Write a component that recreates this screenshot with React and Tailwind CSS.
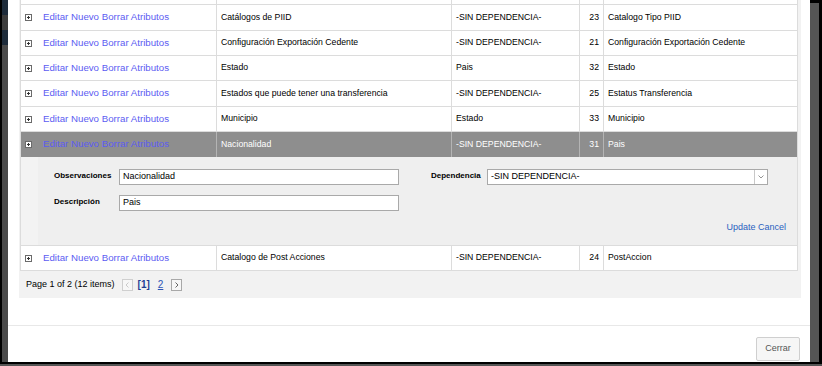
import React from "react";

const rowsTop = [
  { name: "Catálogos de PIID", dep: "-SIN DEPENDENCIA-", id: "23", desc: "Catalogo Tipo PIID", h: "h-[26px]" },
  { name: "Configuración Exportación Cedente", dep: "-SIN DEPENDENCIA-", id: "21", desc: "Configuración Exportación Cedente", h: "h-[25px]" },
  { name: "Estado", dep: "Pais", id: "32", desc: "Estado", h: "h-[25px]" },
  { name: "Estados que puede tener una transferencia", dep: "-SIN DEPENDENCIA-", id: "25", desc: "Estatus Transferencia", h: "h-[26px]" },
  { name: "Municipio", dep: "Estado", id: "33", desc: "Municipio", h: "h-[25px]" },
];

const GRID = "grid grid-cols-[17px_178px_235px_128px_24px_194px]";

function PlusIcon() {
  return (
    <svg width="7" height="7" viewBox="0 0 7 7" className="block">
      <rect x="0.5" y="0.5" width="6" height="6" fill="#fff" stroke="#6b6b6b" />
      <path d="M2 3.5H5M3.5 2V5" stroke="#333" strokeWidth="1" />
    </svg>
  );
}

function Row({ r, gray }) {
  const sep = gray ? "border-l border-[#b4b4b4]" : "border-l border-[#dcdcdc]";
  const txt = gray ? "text-white" : "text-black";
  return (
    <div className={`${GRID} ${r.h} ${gray ? "bg-[#8e8e8e]" : "bg-white border-b border-[#dcdcdc]"} text-[8.7px] ${txt}`}>
      <div className="flex items-center pl-[4px]">
        <PlusIcon />
      </div>
      <div className="flex items-center pl-[5px] text-[9.7px] text-[#5c5cf2] whitespace-nowrap">
        Editar Nuevo Borrar Atributos
      </div>
      <div className={`flex items-center pl-[4px] whitespace-nowrap ${sep}`}>{r.name}</div>
      <div className={`flex items-center pl-[4px] whitespace-nowrap ${sep}`}>{r.dep}</div>
      <div className={`flex items-center justify-end pr-[4px] ${sep}`}>{r.id}</div>
      <div className={`flex items-center pl-[4px] whitespace-nowrap ${sep}`}>{r.desc}</div>
    </div>
  );
}

function EditForm() {
  return (
    <div className="flex h-[89px] border-b border-[#dcdcdc]">
      <div className="w-[17px] bg-[#f3f3f3]" />
      <div className="flex-1 bg-[#efefef] flex flex-col pt-[12px] pl-[16px] pr-[11px]">
        <div className="flex items-start">
          <div className="w-[65px] pt-[2px] text-[8px] font-bold leading-[10px] text-black">Observaciones</div>
          <div className="w-[280px] h-[16px] bg-white border border-[#a9a9a9] flex items-center pl-[3px] text-[9px] text-black">
            Nacionalidad
          </div>
          <div className="w-[56px] ml-[32px] pt-[2px] text-[8px] font-bold leading-[10px] text-black">Dependencia</div>
          <div className="w-[281px] h-[16px] bg-white border border-[#a9a9a9] flex items-stretch text-[9px] text-black">
            <div className="flex-1 flex items-center pl-[3px]">-SIN DEPENDENCIA-</div>
            <div className="w-[13px] border-l border-[#c8c8c8] flex items-center justify-center">
              <svg width="6" height="4" viewBox="0 0 6 4">
                <path d="M0.5 0.5L3 3L5.5 0.5" fill="none" stroke="#888" strokeWidth="0.9" />
              </svg>
            </div>
          </div>
        </div>
        <div className="flex items-start mt-[10px]">
          <div className="w-[65px] pt-[2px] text-[8px] font-bold leading-[10px] text-black">Descripción</div>
          <div className="w-[280px] h-[16px] bg-white border border-[#a9a9a9] flex items-center pl-[3px] text-[9px] text-black">
            Pais
          </div>
        </div>
        <div className="flex justify-end mt-[10px] text-[9px] text-[#2a5fc0] leading-[12px]">Update Cancel</div>
      </div>
    </div>
  );
}

export default function App() {
  return (
    <div className="w-[822px] h-[366px] bg-black flex flex-col overflow-hidden font-['Liberation_Sans',Arial,sans-serif]">
      <div className="flex h-[362px]">
        <div className="w-[2px] bg-black" />
        <div className="w-[6px] bg-[#4a4a4a] flex flex-col">
          <div className="h-[15px] bg-[#1d2b3a]" />
          <div className="h-[15px] bg-[#3c3c3c]" />
          <div className="h-[15px] bg-[#1d2b3a]" />
          <div className="flex-1" />
        </div>
        <div className="w-[802px] bg-white flex flex-col">
          <div className="ml-[11px] w-[782px] h-[298px] bg-[#f2f2f2] pl-[1px] flex flex-col">
            <div className="w-[778px] border-x border-[#dcdcdc] flex flex-col">
              <div className={`${GRID} h-[5px] bg-white border-b border-[#dcdcdc]`}>
                <div />
                <div />
                <div className="border-l border-[#dcdcdc]" />
                <div className="border-l border-[#dcdcdc]" />
                <div className="border-l border-[#dcdcdc]" />
                <div className="border-l border-[#dcdcdc]" />
              </div>
              {rowsTop.map((r, i) => (
                <Row key={i} r={r} />
              ))}
              <Row gray r={{ name: "Nacionalidad", dep: "-SIN DEPENDENCIA-", id: "31", desc: "Pais", h: "h-[25px]" }} />
              <EditForm />
              <Row r={{ name: "Catalogo de Post Acciones", dep: "-SIN DEPENDENCIA-", id: "24", desc: "PostAccion", h: "h-[25px]" }} />
            </div>
            <div className="h-[27px] flex items-center pl-[6px] text-[9px] text-black">
              <span>Page 1 of 2 (12 items)</span>
              <span className="ml-[7px] w-[11px] h-[12px] border border-[#cfcfcf] bg-[#f7f7f7] flex items-center justify-center">
                <svg width="4" height="6" viewBox="0 0 4 6">
                  <path d="M3.5 0.5L1 3L3.5 5.5" fill="none" stroke="#c4c4c4" strokeWidth="0.9" />
                </svg>
              </span>
              <span className="ml-[5px] text-[10px] font-bold text-[#1f3f95]">[1]</span>
              <span className="ml-[8px] text-[10px] text-[#2f55b5] underline">2</span>
              <span className="ml-[8px] w-[11px] h-[12px] border border-[#a8a8a8] bg-[#f7f7f7] flex items-center justify-center">
                <svg width="4" height="6" viewBox="0 0 4 6">
                  <path d="M0.5 0.5L3 3L0.5 5.5" fill="none" stroke="#555" strokeWidth="0.9" />
                </svg>
              </span>
            </div>
          </div>
          <div className="mt-[27px] h-[1px] bg-[#e8e8e8]" />
          <div className="flex justify-end pr-[10px] pt-[11px]">
            <button className="w-[44px] h-[24px] bg-[#f6f6f6] border border-[#cfcfcf] rounded-[2px] text-[9px] text-[#555]">
              Cerrar
            </button>
          </div>
        </div>
        <div className="w-[9px] flex flex-col">
          <div className="h-[3px] bg-black" />
          <div className="flex-1 bg-[#555]" />
        </div>
        <div className="w-[3px] bg-black" />
      </div>
      <div className="h-[2px] bg-black" />
      <div className="h-[2px] bg-[#555]" />
    </div>
  );
}
